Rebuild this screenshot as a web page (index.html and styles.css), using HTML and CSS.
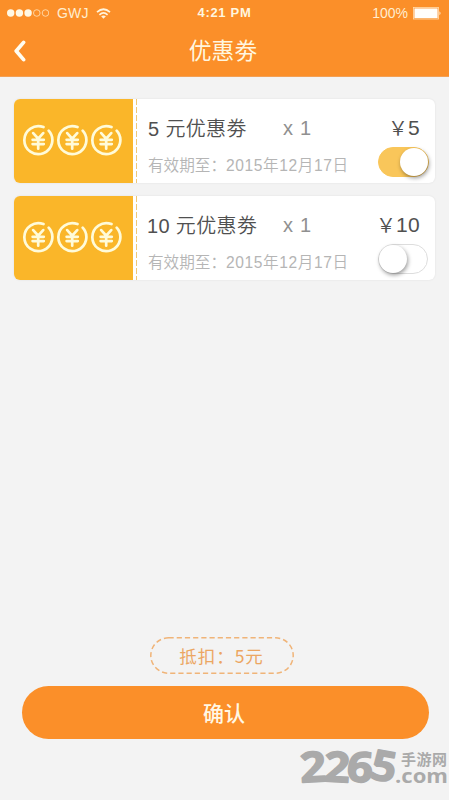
FILE: index.html
```html
<!DOCTYPE html>
<html lang="zh-CN">
<head>
<meta charset="utf-8">
<title>优惠劵</title>
<link rel="stylesheet" href="styles.css">
</head>
<body>
<svg class="defs" aria-hidden="true">
  <symbol id="coin" viewBox="0 0 32 32">
    <path d="M21.5 2.6A14 14 0 1 0 26.7 6.2M11.2 8.6l5 5.6 5-5.6M16.2 14v10.2M10.6 15.3h11.2M10.6 19.6h11.2" fill="none" stroke="#fffbd9" stroke-width="2.7" stroke-linecap="round"/>
  </symbol>
</svg>
<main class="screen">
  <header class="header">
    <div class="status">
      <div class="status-left">
        <svg class="signal" width="42" height="10" viewBox="0 0 42 10"><g fill="#fff8e4"><circle cx="3.7" cy="5" r="3.7"/><circle cx="12.4" cy="5" r="3.7"/><circle cx="21.1" cy="5" r="3.7"/></g><g fill="none" stroke="#ffe4bd" stroke-width=".8"><circle cx="29.8" cy="5" r="3.3"/><circle cx="38.5" cy="5" r="3.3"/></g></svg>
        <span class="carrier">GWJ</span>
        <svg width="15" height="11" viewBox="0 0 15 11"><g fill="none" stroke="#fff4dc" stroke-width="1.7"><path d="M1 4.2Q7.5-1.7 14 4.2"/><path d="M3.4 6.8Q7.5 3.1 11.6 6.8"/></g><path d="M5.1 8.3Q7.5 6.5 9.9 8.3L7.5 10.8z" fill="#fff4dc"/></svg>
      </div>
      <span class="clock">4:21 PM</span>
      <div class="status-right">
        <span class="percent">100%</span>
        <svg width="29" height="13" viewBox="0 0 29 13"><rect x=".5" y=".5" width="25" height="11.5" fill="none" stroke="#ffdcae" stroke-width=".8"/><rect x="1.4" y="1.4" width="23.2" height="9.7" fill="#fffefa"/><path d="M26.5 4.2q2 2 0 4z" fill="#fff4dc"/></svg>
      </div>
    </div>
    <nav class="nav">
      <svg class="back" width="12" height="22" viewBox="0 0 12 22"><path d="M9.6 2.4L2.2 11l7.4 8.6" fill="none" stroke="#fffdf2" stroke-width="3.7" stroke-linecap="round" stroke-linejoin="round"/></svg>
      <h1 class="title">优惠劵</h1>
    </nav>
  </header>

  <section class="coupons">
    <article class="coupon">
      <div class="stub"><svg><use href="#coin"/></svg><svg><use href="#coin"/></svg><svg><use href="#coin"/></svg></div>
      <div class="perforation"></div>
      <div class="details">
        <div class="row main-row"><span class="name">5 元优惠劵</span><span class="count">x 1</span><span class="price"><span class="yen">￥</span>5</span></div>
        <div class="row sub-row"><span class="label">有效期至：</span><span class="date">2015年12月17日</span><span class="toggle on"><span class="knob"></span></span></div>
      </div>
    </article>
    <article class="coupon">
      <div class="stub"><svg><use href="#coin"/></svg><svg><use href="#coin"/></svg><svg><use href="#coin"/></svg></div>
      <div class="perforation"></div>
      <div class="details">
        <div class="row main-row"><span class="name ten">10 元优惠劵</span><span class="count">x 1</span><span class="price"><span class="yen">￥</span>10</span></div>
        <div class="row sub-row"><span class="label">有效期至：</span><span class="date">2015年12月17日</span><span class="toggle"><span class="knob"></span></span></div>
      </div>
    </article>
  </section>

  <footer class="footer">
    <div class="deduct">
      <svg class="deduct-border" width="144" height="37" viewBox="0 0 144 37"><rect x=".8" y=".8" width="142.4" height="35.4" rx="17.7" fill="none" stroke="#f0b478" stroke-width="1.5" stroke-dasharray="5.2 3"/></svg>
      <span>抵扣：5元</span>
    </div>
    <button class="confirm">确认</button>
  </footer>

  <svg class="watermark" width="151" height="56" viewBox="0 -5 151 56">
    <g class="wm-num">
      <text x="2" y="33" textLength="26" lengthAdjust="spacingAndGlyphs" transform="rotate(-3 14 20)">2</text>
      <text x="26" y="33" textLength="26" lengthAdjust="spacingAndGlyphs" transform="rotate(3 40 20)">2</text>
      <text x="49" y="33" textLength="26" lengthAdjust="spacingAndGlyphs" transform="rotate(5 62 20)">6</text>
      <text x="73" y="32" textLength="25" lengthAdjust="spacingAndGlyphs" transform="rotate(10 87 20)">5</text>
    </g>
    <text class="wm-cn" x="103" y="16" textLength="46">手游网</text>
    <text class="wm-com" x="97" y="34" textLength="53" lengthAdjust="spacingAndGlyphs">.com</text>
  </svg>
</main>
</body>
</html>
```

FILE: styles.css
```css
* { box-sizing: border-box; }
body { margin: 0; background: #f3f3f3; font-family: "Liberation Sans", "Noto Sans CJK SC", sans-serif; }
svg { display: block; flex: none; }
.defs { position: absolute; width: 0; height: 0; }
.screen { position: relative; width: 449px; height: 800px; display: flex; flex-direction: column; overflow: hidden; background: #f3f3f3; }

.header { height: 77px; background: #fb8f29; color: #fff6df; border-bottom: 1px solid #f3a055; }
.status { height: 26px; display: grid; grid-template-columns: 1fr auto 1fr; align-items: center; padding: 0 7px; font-size: 12px; line-height: 26px; }
.status-left, .status-right { display: flex; align-items: center; }
.carrier { font-size: 14px; width: 33px; margin: 0 6px 0 8px; letter-spacing: .2px; color: #ffedcf; }
.clock { font-size: 13px; font-weight: 700; letter-spacing: .7px; }
.status-right { justify-content: flex-end; gap: 5px; }
.percent { font-size: 14px; color: #ffedcf; letter-spacing: 0; }
.nav { height: 50px; display: grid; grid-template-columns: 30px 1fr 47px; align-items: center; padding-left: 14px; }
.title { margin: 0; padding-bottom: 2px; text-align: center; font: 400 22.8px/48px "Noto Sans CJK SC", sans-serif; }

.coupons { display: flex; flex-direction: column; gap: 13px; padding: 22px 14px 0; }
.coupon { height: 84px; display: flex; border-radius: 6px; background: #fff; box-shadow: 0 0 2px #dedede; overflow: hidden; }
.stub { width: 119px; display: flex; align-items: center; justify-content: center; gap: 2px; padding: 0 3px 2px 0; background: #fab629; }
.stub svg { width: 32px; height: 33px; }
.perforation { width: 1px; margin-left: 3px; background: repeating-linear-gradient(#eec778 0 6px, #fff 6px 8px); }
.details { flex: 1; padding: 11px 6px 0 11px; }
.row { display: flex; align-items: center; white-space: nowrap; }
.main-row { height: 34px; padding-right: 9px; font-size: 20px; color: #505050; }
.name { width: 135px; font-weight: 350; letter-spacing: .35px; font-size: 20px; }
.name.ten { text-indent: -1px; }
.count { padding-top: 2px; letter-spacing: .7px; color: #909090; }
.price { display: flex; margin-left: auto; font-size: 21px; letter-spacing: .3px; line-height: 32px; padding-top: 1px; }
.yen { font-family: "Noto Sans CJK SC", sans-serif; font-weight: 350; font-size: 20px; letter-spacing: 0; }
.sub-row { height: 30px; margin-top: 4px; font-size: 15.6px; font-weight: 350; color: #b5b5b5; }
.label { width: 78px; padding-top: 2px; }
.date { padding-top: 2px; letter-spacing: .6px; }
.toggle { width: 50px; height: 30px; display: flex; margin: -3px 1px 0 auto; border: 1px solid #ddd; border-radius: 15px; background: #fff; }
.toggle.on { width: 51px; margin-right: 0; justify-content: flex-end; border-color: #f9c65a; background: #f9c65a; }
.knob { width: 28px; height: 28px; border-radius: 50%; background: #fff; box-shadow: 1px 2px 4px rgba(0,0,0,.4); }

.footer { margin-top: 357px; display: flex; flex-direction: column; align-items: center; gap: 12px; }
.deduct { width: 144px; height: 37px; margin-right: 6px; display: grid; place-items: center; color: #eca662; font: 400 17.5px/37px "Noto Sans CJK SC", sans-serif; letter-spacing: 1px; }
.deduct > * { grid-area: 1 / 1; }
.confirm { width: 407px; height: 53px; margin-left: 2px; padding: 0 3px 1px 0; border: 0; border-radius: 27px; background: #fb8f29; color: #fff8e5; font: 500 21px/52px "Noto Sans CJK SC", sans-serif; }

.watermark { position: absolute; left: 298px; top: 744px; fill: #aaa; }
.wm-num { font: 700 42px "Open Sans", sans-serif; stroke: #aaa; stroke-width: 1.5; stroke-linejoin: round; }
.wm-cn { font: 700 15px "Noto Sans CJK SC", sans-serif; }
.wm-com { font: 700 20px "Open Sans", sans-serif; }
```
